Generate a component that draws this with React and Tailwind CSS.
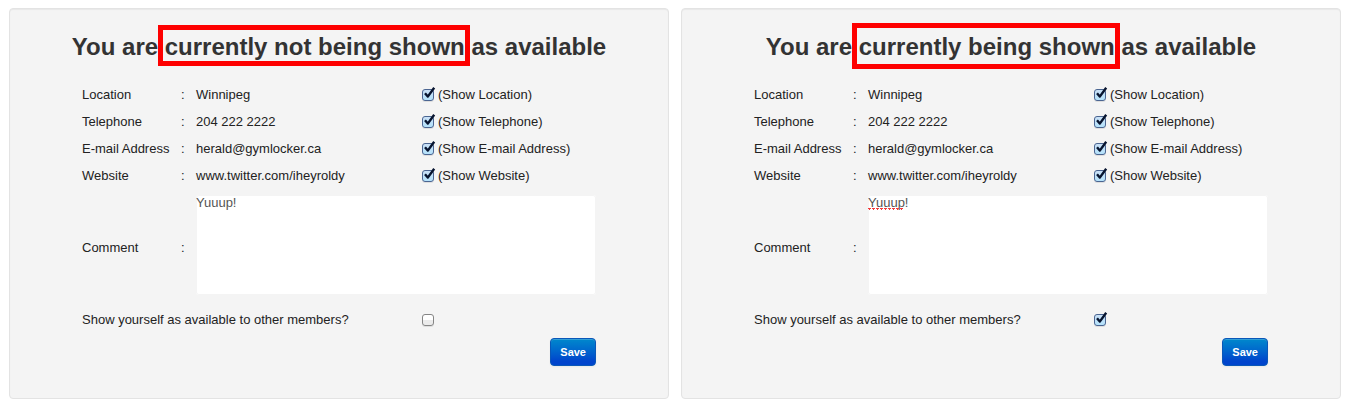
import React, { useId, useState } from 'react';

const details = [
  { label: 'Location', value: 'Winnipeg' },
  { label: 'Telephone', value: '204 222 2222' },
  { label: 'E-mail Address', value: 'herald@gymlocker.ca' },
  { label: 'Website', value: 'www.twitter.com/iheyroldy' },
];

function Checkbox({ id, defaultChecked }) {
  const [checked, setChecked] = useState(defaultChecked);
  return (
    <span className="relative block size-3 shrink-0">
      <input
        id={id}
        type="checkbox"
        checked={checked}
        onChange={(e) => setChecked(e.target.checked)}
        className="block size-3 appearance-none rounded-[3px] border border-[#858585] bg-linear-to-b from-white from-50% to-[#ebebeb] to-50% shadow-[0_1px_0_#dedede] checked:border-[#4b6591] checked:from-[#c9e0f6] checked:from-0% checked:to-[#b4e2fb] checked:to-100%"
      />
      {checked && (
        <svg
          className="pointer-events-none absolute -top-0.5 left-0 h-3.5 w-3.5"
          viewBox="0 0 14 14"
          fill="none"
          stroke="#07142f"
          aria-hidden="true"
        >
          <path d="M3 6.2 L5.8 9.6 L12.2 0.8" strokeWidth="2.4" strokeLinejoin="round" />
        </svg>
      )}
    </span>
  );
}

function SpellingMark() {
  return (
    <svg
      className="pointer-events-none absolute top-[13px] left-0 h-[3px] w-9"
      viewBox="0 0 36 3"
      fill="#f23b3b"
      aria-hidden="true"
    >
      {[0, 4, 8, 12, 16, 20, 24, 28, 32].map((x) => (
        <path key={x} d={`M${x} 0h3v1h-1v1h-1v-1h-1z`} />
      ))}
    </svg>
  );
}

function AvailabilityPanel({ status, available, misspelled, frame }) {
  const id = useId();
  return (
    <form
      onSubmit={(e) => e.preventDefault()}
      className="rounded border border-[#e3e3e3] bg-[#f4f4f4] px-5 pt-[18px] pb-7 shadow-[inset_0_1px_1px_rgba(0,0,0,0.05)]"
    >
      <h3 className="text-center text-[24px] leading-10 font-bold whitespace-nowrap text-[#333]">
        You are{' '}
        <span className="relative inline-block">
          {status}
          <span className={`pointer-events-none absolute border-5 border-[#fe0000] ${frame}`} />
        </span>{' '}
        as available
      </h3>
      <table className="mx-auto mt-3.5 w-full max-w-[522px] table-fixed text-[13px] leading-[19px] text-[#222]">
        <colgroup>
          <col className="w-[99px]" />
          <col className="w-[15px]" />
          <col className="w-[226px]" />
          <col />
        </colgroup>
        <tbody>
          {details.map(({ label, value }, i) => (
            <tr key={label}>
              <th scope="row" className="p-1 text-left font-normal whitespace-nowrap">{label}</th>
              <td className="p-1">:</td>
              <td className="p-1">{value}</td>
              <td className="p-1">
                <label htmlFor={`${id}-${i}`} className="flex items-center gap-1 whitespace-nowrap">
                  <Checkbox id={`${id}-${i}`} defaultChecked />
                  (Show {label})
                </label>
              </td>
            </tr>
          ))}
          <tr>
            <th scope="row" className="p-1 text-left font-normal">
              <label htmlFor={`${id}-comment`}>Comment</label>
            </th>
            <td className="p-1">:</td>
            <td colSpan={2} className="px-1 pt-1.5 pb-[11px]">
              <div className="relative">
                <textarea
                  id={`${id}-comment`}
                  defaultValue="Yuuup!"
                  spellCheck={false}
                  className="block h-[100px] w-full resize-none rounded-[3px] border-0 bg-white leading-[15px] text-[#555] shadow-[inset_0_0_0_1px_#f4f4f4] outline-none"
                />
                {misspelled && <SpellingMark />}
              </div>
            </td>
          </tr>
          <tr>
            <td colSpan={3} className="p-1">
              <label htmlFor={`${id}-available`}>Show yourself as available to other members?</label>
            </td>
            <td className="p-1">
              <Checkbox id={`${id}-available`} defaultChecked={available} />
            </td>
          </tr>
          <tr>
            <td colSpan={4} className="px-1 pt-[5px] pb-1 text-right">
              <button
                type="submit"
                className="h-7 rounded border border-[#0a57b8] bg-linear-to-b from-[#0088cc] from-0% to-[#0044cc] to-85% px-[9px] text-[11px] leading-4 font-bold text-white shadow-[inset_0_1px_0_rgba(255,255,255,0.2),0_1px_2px_rgba(0,0,0,0.05)]"
              >
                Save
              </button>
            </td>
          </tr>
        </tbody>
      </table>
    </form>
  );
}

export default function App() {
  return (
    <main className="grid grid-cols-2 gap-3 bg-white py-2 pr-2 pl-[9px] font-['Liberation_Sans',Arial,sans-serif]">
      <AvailabilityPanel
        status="currently not being shown"
        available={false}
        frame="-top-0.5 bottom-px -left-[7px] -right-[5px]"
      />
      <AvailabilityPanel
        status="currently being shown"
        available
        misspelled
        frame="-top-1 -bottom-0.5 -left-[7px] -right-[5px]"
      />
    </main>
  );
}
